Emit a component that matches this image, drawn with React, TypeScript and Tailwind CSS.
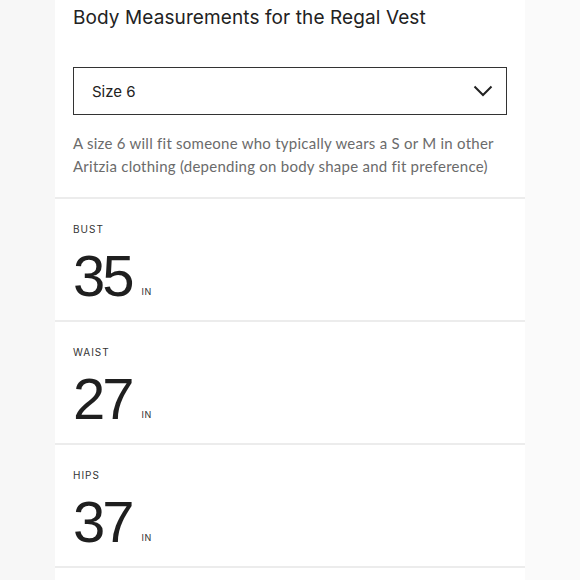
import React from "react";

const items = [
  { label: "BUST", value: "35" },
  { label: "WAIST", value: "27" },
  { label: "HIPS", value: "37" },
];

export default function App() {
  return (
    <div
      className="w-[580px] h-[580px] flex overflow-hidden bg-[#fafafa]"
      style={{ fontFamily: "Inter, 'Noto Sans', sans-serif" }}
    >
      <div className="w-[55px] h-full bg-[#f7f7f7]" />
      <div className="w-[470px] h-full bg-white flex flex-col">
        <div className="px-[18px]">
          <div className="pt-[5px] h-[67px] text-[19px] leading-[26px] text-[#222] tracking-[0.1px]">
            Body Measurements for the Regal Vest
          </div>
          <div className="h-[48px] w-[434px] border-[1.5px] border-[#333] flex items-center justify-between pl-[18px] pr-[13px]">
            <span className="text-[15px] text-[#222] pt-[2px]">Size 6</span>
            <svg width="20" height="12" viewBox="0 0 20 12" fill="none">
              <path d="M1.5 1.5 L10 10 L18.5 1.5" stroke="#222" strokeWidth="2" />
            </svg>
          </div>
          <div
            className="pt-[17px] text-[15px] leading-[22.5px] text-[#6b6b6b] h-[82px] tracking-[0.25px]"
            style={{ fontFamily: "Lato, 'Noto Sans', sans-serif" }}
          >
            A size 6 will fit someone who typically wears a S or M in other Aritzia clothing (depending on body shape and fit preference)
          </div>
        </div>
        {items.map((it) => (
          <div key={it.label} className="h-[123px] border-t-[2px] border-[#ececec] px-[18px] flex flex-col">
            <div className="pt-[24px] text-[10px] leading-[12px] tracking-[1px] text-[#333]">
              {it.label}
            </div>
            <div className="flex items-end mt-[12px]">
              <span
                className="text-[58px] leading-[58px] text-[#1f1f1f] tracking-[-3px]"
                style={{ fontFamily: "'Liberation Sans', Arial, sans-serif" }}
              >
                {it.value}
              </span>
              <span className="text-[9px] leading-[9px] tracking-[0.5px] text-[#333] ml-[10px] mb-[9px]">IN</span>
            </div>
          </div>
        ))}
        <div className="border-t-[2px] border-[#ececec]" />
      </div>
      <div className="flex-1 h-full bg-[#fafafa]" />
    </div>
  );
}
